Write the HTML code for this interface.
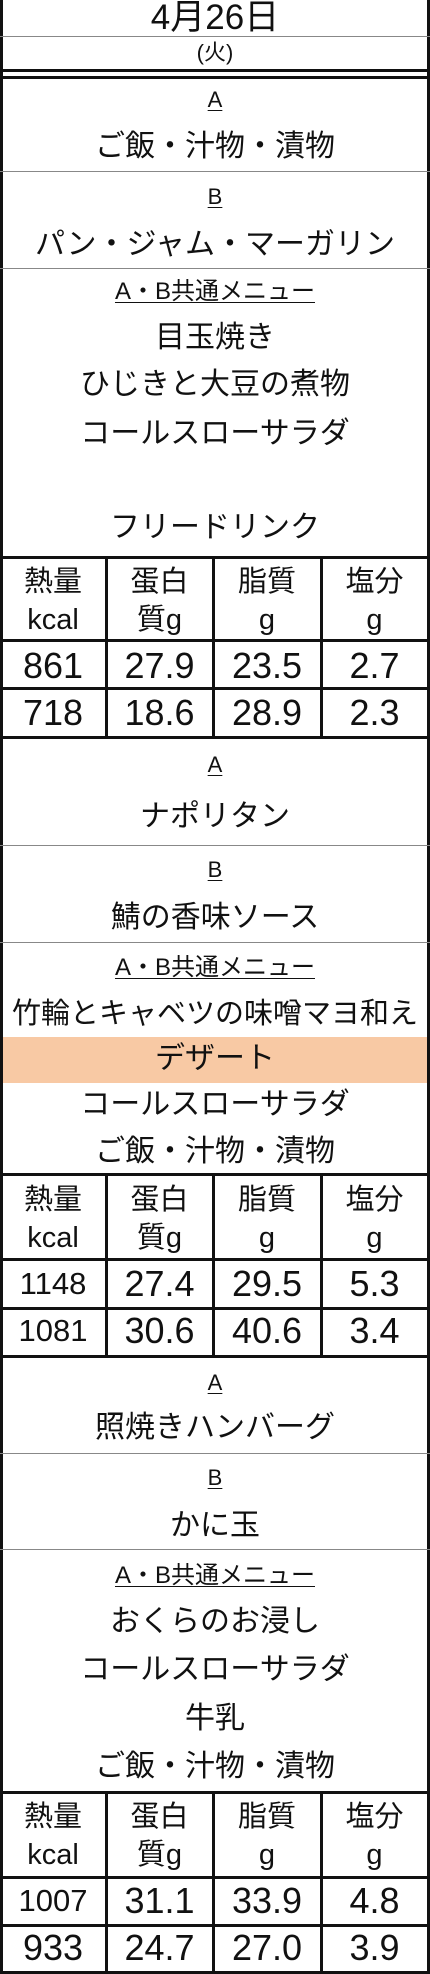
<!DOCTYPE html>
<html><head><meta charset="utf-8"><style>
html,body{margin:0;padding:0;background:#fff}
body{width:430px;height:1974px;position:relative;overflow:hidden;font-family:"Liberation Sans","Noto Sans CJK JP",sans-serif;color:#111}
.h{position:absolute;left:0;width:430px;background:#888;height:1px}
.k{position:absolute;left:0;width:430px;background:#111;height:3px}
.v{position:absolute;width:3px;background:#111}
.t{position:absolute;left:0;width:430px;text-align:center;height:40px;line-height:40px;font-size:30px;white-space:nowrap}
.l{font-size:22px}
.l span{text-decoration:underline;text-underline-offset:3px;text-decoration-thickness:1px}
.c{position:absolute;text-align:center;height:40px;line-height:40px;white-space:nowrap}
.hd{font-size:29px}
.n{font-size:36px}
</style></head><body>
<div class="v" style="left:0;top:0;height:1974px"></div>
<div class="v" style="left:427px;top:0;height:1974px"></div>

<div class="t" style="top:-2px;font-size:35px">4月26日</div>
<div class="h" style="top:36px"></div>
<div class="t" style="top:33px;font-size:22px">(火)</div>
<div class="k" style="top:69px"></div>
<div class="k" style="top:76px"></div>

<div class="t l" style="top:80px"><span>A</span></div>
<div class="t" style="top:127px">ご飯・汁物・漬物</div>
<div class="h" style="top:171px"></div>
<div class="t l" style="top:177px"><span>B</span></div>
<div class="t" style="top:225px">パン・ジャム・マーガリン</div>
<div class="h" style="top:268px"></div>
<div class="t l" style="top:272px;font-size:24px"><span>A・B共通メニュー</span></div>
<div class="t" style="top:318px">目玉焼き</div>
<div class="t" style="top:365px">ひじきと大豆の煮物</div>
<div class="t" style="top:414px">コールスローサラダ</div>
<div class="t" style="top:508px">フリードリンク</div>

<div class="k" style="top:556px"></div>
<div class="k" style="top:639px"></div>
<div class="k" style="top:687px"></div>
<div class="k" style="top:736px"></div>
<div class="v" style="left:105px;top:556px;height:182px"></div>
<div class="v" style="left:212px;top:556px;height:182px"></div>
<div class="v" style="left:320px;top:556px;height:182px"></div>
<div class="c hd" style="left:0;width:106px;top:562px">熱量</div>
<div class="c hd" style="left:0;width:106px;top:600px">kcal</div>
<div class="c hd" style="left:106px;width:107px;top:562px">蛋白</div>
<div class="c hd" style="left:106px;width:107px;top:600px">質g</div>
<div class="c hd" style="left:213px;width:108px;top:562px">脂質</div>
<div class="c hd" style="left:213px;width:108px;top:600px">g</div>
<div class="c hd" style="left:321px;width:107px;top:562px">塩分</div>
<div class="c hd" style="left:321px;width:107px;top:600px">g</div>
<div class="c n" style="left:0;width:106px;top:646px">861</div>
<div class="c n" style="left:106px;width:107px;top:646px">27.9</div>
<div class="c n" style="left:213px;width:108px;top:646px">23.5</div>
<div class="c n" style="left:321px;width:107px;top:646px">2.7</div>
<div class="c n" style="left:0;width:106px;top:693px">718</div>
<div class="c n" style="left:106px;width:107px;top:693px">18.6</div>
<div class="c n" style="left:213px;width:108px;top:693px">28.9</div>
<div class="c n" style="left:321px;width:107px;top:693px">2.3</div>

<div class="t l" style="top:745px"><span>A</span></div>
<div class="t" style="top:797px">ナポリタン</div>
<div class="h" style="top:845px"></div>
<div class="t l" style="top:850px"><span>B</span></div>
<div class="t" style="top:898px">鯖の香味ソース</div>
<div class="h" style="top:942px"></div>
<div class="t l" style="top:948px;font-size:24px"><span>A・B共通メニュー</span></div>
<div class="t" style="top:994px;font-size:29px">竹輪とキャベツの味噌マヨ和え</div>
<div style="position:absolute;left:3px;width:424px;top:1037px;height:46px;background:#f8c9a4"></div>
<div class="t" style="top:1039px">デザート</div>
<div class="t" style="top:1085px">コールスローサラダ</div>
<div class="t" style="top:1132px">ご飯・汁物・漬物</div>

<div class="k" style="top:1173px"></div>
<div class="k" style="top:1258px"></div>
<div class="k" style="top:1307px"></div>
<div class="k" style="top:1355px"></div>
<div class="v" style="left:105px;top:1173px;height:184px"></div>
<div class="v" style="left:212px;top:1173px;height:184px"></div>
<div class="v" style="left:320px;top:1173px;height:184px"></div>
<div class="c hd" style="left:0;width:106px;top:1180px">熱量</div>
<div class="c hd" style="left:0;width:106px;top:1218px">kcal</div>
<div class="c hd" style="left:106px;width:107px;top:1180px">蛋白</div>
<div class="c hd" style="left:106px;width:107px;top:1218px">質g</div>
<div class="c hd" style="left:213px;width:108px;top:1180px">脂質</div>
<div class="c hd" style="left:213px;width:108px;top:1218px">g</div>
<div class="c hd" style="left:321px;width:107px;top:1180px">塩分</div>
<div class="c hd" style="left:321px;width:107px;top:1218px">g</div>
<div class="c n" style="left:0;width:106px;top:1264px;font-size:31px">1148</div>
<div class="c n" style="left:106px;width:107px;top:1264px">27.4</div>
<div class="c n" style="left:213px;width:108px;top:1264px">29.5</div>
<div class="c n" style="left:321px;width:107px;top:1264px">5.3</div>
<div class="c n" style="left:0;width:106px;top:1311px;font-size:31px">1081</div>
<div class="c n" style="left:106px;width:107px;top:1311px">30.6</div>
<div class="c n" style="left:213px;width:108px;top:1311px">40.6</div>
<div class="c n" style="left:321px;width:107px;top:1311px">3.4</div>

<div class="t l" style="top:1363px"><span>A</span></div>
<div class="t" style="top:1408px">照焼きハンバーグ</div>
<div class="h" style="top:1453px"></div>
<div class="t l" style="top:1458px"><span>B</span></div>
<div class="t" style="top:1506px">かに玉</div>
<div class="h" style="top:1549px"></div>
<div class="t l" style="top:1556px;font-size:24px"><span>A・B共通メニュー</span></div>
<div class="t" style="top:1602px">おくらのお浸し</div>
<div class="t" style="top:1650px">コールスローサラダ</div>
<div class="t" style="top:1699px">牛乳</div>
<div class="t" style="top:1747px">ご飯・汁物・漬物</div>

<div class="k" style="top:1791px"></div>
<div class="k" style="top:1876px"></div>
<div class="k" style="top:1924px"></div>
<div class="k" style="top:1971px"></div>
<div class="v" style="left:105px;top:1791px;height:183px"></div>
<div class="v" style="left:212px;top:1791px;height:183px"></div>
<div class="v" style="left:320px;top:1791px;height:183px"></div>
<div class="c hd" style="left:0;width:106px;top:1797px">熱量</div>
<div class="c hd" style="left:0;width:106px;top:1835px">kcal</div>
<div class="c hd" style="left:106px;width:107px;top:1797px">蛋白</div>
<div class="c hd" style="left:106px;width:107px;top:1835px">質g</div>
<div class="c hd" style="left:213px;width:108px;top:1797px">脂質</div>
<div class="c hd" style="left:213px;width:108px;top:1835px">g</div>
<div class="c hd" style="left:321px;width:107px;top:1797px">塩分</div>
<div class="c hd" style="left:321px;width:107px;top:1835px">g</div>
<div class="c n" style="left:0;width:106px;top:1881px;font-size:31px">1007</div>
<div class="c n" style="left:106px;width:107px;top:1881px">31.1</div>
<div class="c n" style="left:213px;width:108px;top:1881px">33.9</div>
<div class="c n" style="left:321px;width:107px;top:1881px">4.8</div>
<div class="c n" style="left:0;width:106px;top:1928px">933</div>
<div class="c n" style="left:106px;width:107px;top:1928px">24.7</div>
<div class="c n" style="left:213px;width:108px;top:1928px">27.0</div>
<div class="c n" style="left:321px;width:107px;top:1928px">3.9</div>
</body></html>
